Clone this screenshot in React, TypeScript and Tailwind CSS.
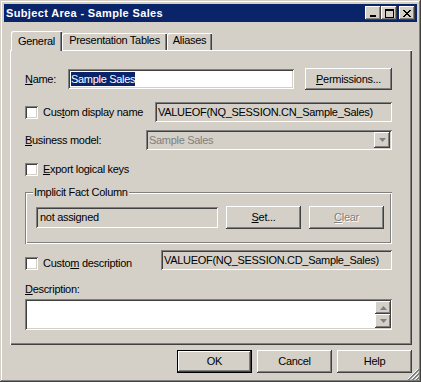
import React from "react";

const raised =
  "shadow-[inset_-1px_-1px_#404040,inset_1px_1px_#ffffff,inset_-2px_-2px_#808080,inset_2px_2px_#d4d0c8]";
const sunken =
  "shadow-[inset_1px_1px_#808080,inset_-1px_-1px_#ffffff,inset_2px_2px_#404040,inset_-2px_-2px_#d4d0c8]";

function Check() {
  return <div className={`w-[13px] h-[13px] shrink-0 bg-white ${sunken}`} />;
}

function Btn({
  children,
  w = 75,
  h = 23,
  def = false,
  disabled = false,
}: {
  children: React.ReactNode;
  w?: number;
  h?: number;
  def?: boolean;
  disabled?: boolean;
}) {
  const shadow = def
    ? "shadow-[inset_0_0_0_1px_#000000,inset_-2px_-2px_#404040,inset_2px_2px_#ffffff,inset_-3px_-3px_#808080,inset_3px_3px_#d4d0c8]"
    : raised;
  return (
    <div
      className={`flex items-center justify-center shrink-0 bg-[#d4d0c8] ${shadow} ${
        disabled ? "text-[#808080] [text-shadow:1px_1px_#ffffff]" : "text-black"
      }`}
      style={{ width: w, height: h }}
    >
      {children}
    </div>
  );
}

function Arrow({ dir, color = "#000" }: { dir: "up" | "down"; color?: string }) {
  return (
    <svg width="7" height="4" viewBox="0 0 7 4">
      {dir === "down" ? (
        <path d="M0 0h7L3.5 4z" fill={color} />
      ) : (
        <path d="M0 4h7L3.5 0z" fill={color} />
      )}
    </svg>
  );
}

export default function App() {
  return (
    <div className="relative w-[421px] h-[382px] bg-[#d4d0c8] p-[4px] flex flex-col font-['Liberation_Sans',Arial,sans-serif] text-[11px] leading-[13px] tracking-[-0.3px] text-black shadow-[inset_-1px_-1px_#404040,inset_1px_1px_#d4d0c8,inset_-2px_-2px_#808080,inset_2px_2px_#ffffff] overflow-hidden">
      {/* Title bar */}
      <div className="h-[18px] bg-[#0a246a] flex items-center pl-[2px] pr-[2px] shrink-0">
        <div className="text-white font-bold tracking-[0.35px] flex-1">Subject Area - Sample Sales</div>
        <div className={`w-[16px] h-[14px] bg-[#d4d0c8] ${raised} flex items-end justify-center pb-[3px] pr-[1px]`}>
          <div className="w-[6px] h-[2px] bg-black" />
        </div>
        <div className={`w-[16px] h-[14px] bg-[#d4d0c8] ${raised} flex items-center justify-center`}>
          <svg width="9" height="9" viewBox="0 0 9 9">
            <path d="M0 0h9v9H0z M1 2v6h7V2z" fill="#000" fillRule="evenodd" />
          </svg>
        </div>
        <div className={`ml-[2px] w-[16px] h-[14px] bg-[#d4d0c8] ${raised} flex items-center justify-center`}>
          <svg width="8" height="7" viewBox="0 0 8 7">
            <path
              d="M0 0h2v1h1v1h2V1h1V0h2v1H7v1H6v1H5v1h1v1h1v1h1v1H6V6H5V5H3v1H2v1H0V6h1V5h1V4h1V3H2V2H1V1H0z"
              fill="#000"
            />
          </svg>
        </div>
      </div>

      {/* Tabs */}
      <div className="mt-[9px] ml-[7px] h-[19px] flex items-end shrink-0">
        <div className="relative z-10 -mb-[1px] h-[20px] w-[51px] bg-[#d4d0c8] flex justify-center pt-[4px] shadow-[inset_1px_1px_#ffffff,inset_-1px_0_#404040,inset_-2px_0_#808080] rounded-tl-[2px]">
          General
        </div>
        <div className="h-[17px] w-[105px] flex justify-center pt-[1px] shadow-[inset_1px_1px_#ffffff,inset_-1px_0_#404040,inset_-2px_0_#808080] rounded-tl-[2px]">
          Presentation Tables
        </div>
        <div className="h-[17px] w-[45px] flex justify-center pt-[1px] shadow-[inset_1px_1px_#ffffff,inset_-1px_0_#404040,inset_-2px_0_#808080] rounded-tl-[2px]">
          Aliases
        </div>
      </div>

      {/* Panel */}
      <div className="ml-[6px] mr-[5px] h-[295px] shrink-0 pl-[15px] pr-[20px] pt-[18px] flex flex-col shadow-[inset_1px_1px_#ffffff,inset_-1px_-1px_#404040,inset_-2px_-2px_#808080]">
        {/* Name */}
        <div className="h-[22px] flex items-center">
          <div className="w-[43px]">
            <u>N</u>ame:
          </div>
          <div className={`w-[226px] h-[20px] bg-white ${sunken} flex items-center pl-[3px]`}>
            <span className="bg-[#0a246a] text-white leading-[14px]">Sample Sales</span>
          </div>
          <div className="ml-[11px]">
            <Btn w={87} h={22}>
              <span>
                <u>P</u>ermissions...
              </span>
            </Btn>
          </div>
        </div>

        {/* Custom display name */}
        <div className="mt-[12px] h-[20px] flex items-start">
          <div className="mt-[3px] flex items-center">
            <Check />
            <div className="ml-[5px] mt-[1px]">
              Cus<u>t</u>om display name
            </div>
          </div>
          <div className={`ml-auto w-[237px] h-[20px] ${sunken} flex items-center pl-[3px]`}>
            VALUEOF(NQ_SESSION.CN_Sample_Sales)
          </div>
        </div>

        {/* Business model */}
        <div className="mt-[8px] h-[20px] flex items-center">
          <div>
            <u>B</u>usiness model:
          </div>
          <div className={`ml-auto w-[246px] h-[20px] ${sunken} flex items-center pl-[3px] pr-[2px]`}>
            <span className="flex-1 text-[#808080]">Sample Sales</span>
            <div className={`w-[16px] h-[16px] ${raised} flex items-center justify-center`}>
              <Arrow dir="down" color="#808080" />
            </div>
          </div>
        </div>

        {/* Export logical keys */}
        <div className="mt-[13px] h-[13px] flex items-center">
          <Check />
          <div className="ml-[5px]">
            <u>E</u>xport logical keys
          </div>
        </div>

        {/* Group box */}
        <div className="relative mt-[16px] h-[52px] pl-[11px] pt-[14px] shadow-[inset_1px_1px_#808080,inset_-1px_-1px_#ffffff,inset_2px_2px_#ffffff,inset_-2px_-2px_#808080]">
          <div className="absolute left-[8px] -top-[6px] px-[1px] bg-[#d4d0c8]">Implicit Fact Column</div>
          <div className="h-[23px] flex items-start">
            <div className={`mt-[1px] w-[182px] h-[21px] ${sunken} flex items-center pl-[4px]`}>
              not assigned
            </div>
            <div className="ml-[8px]">
              <Btn>
                <span>
                  <u>S</u>et...
                </span>
              </Btn>
            </div>
            <div className="ml-[8px]">
              <Btn disabled>
                <span>
                  <u>C</u>lear
                </span>
              </Btn>
            </div>
          </div>
        </div>

        {/* Custom description */}
        <div className="mt-[6px] h-[20px] flex items-start">
          <div className="mt-[6px] flex items-center">
            <Check />
            <div className="ml-[5px] mt-[1px]">
              Custo<u>m</u> description
            </div>
          </div>
          <div className={`ml-auto w-[231px] h-[20px] ${sunken} flex items-center pl-[3px]`}>
            VALUEOF(NQ_SESSION.CD_Sample_Sales)
          </div>
        </div>

        {/* Description */}
        <div className="mt-[13px] h-[13px]">
          <u>D</u>escription:
        </div>
        <div className={`mt-[3px] h-[31px] w-[367px] bg-white ${sunken} flex justify-end items-start pt-[2px] pr-[1px]`}>
          <div className="flex flex-col">
            <div className={`w-[16px] h-[13px] bg-[#d4d0c8] ${raised} flex items-center justify-center`}>
              <Arrow dir="up" color="#808080" />
            </div>
            <div className={`w-[16px] h-[14px] bg-[#d4d0c8] ${raised} flex items-center justify-center`}>
              <Arrow dir="down" color="#808080" />
            </div>
          </div>
        </div>
      </div>

      {/* Bottom buttons */}
      <div className="mt-[5px] mr-[5px] flex justify-end gap-[5px]">
        <Btn def>OK</Btn>
        <Btn>Cancel</Btn>
        <Btn>Help</Btn>
      </div>

      {/* Resize grip */}
      <svg className="absolute right-[2px] bottom-[2px]" width="12" height="12" viewBox="0 0 12 12">
        <path d="M11 1L1 11M11 5L5 11M11 9L9 11" stroke="#ffffff" strokeWidth="1" />
        <path d="M12 1L1 12M12 2L2 12M12 5L5 12M12 6L6 12M12 9L9 12M12 10L10 12" stroke="#808080" strokeWidth="1" />
      </svg>
    </div>
  );
}
